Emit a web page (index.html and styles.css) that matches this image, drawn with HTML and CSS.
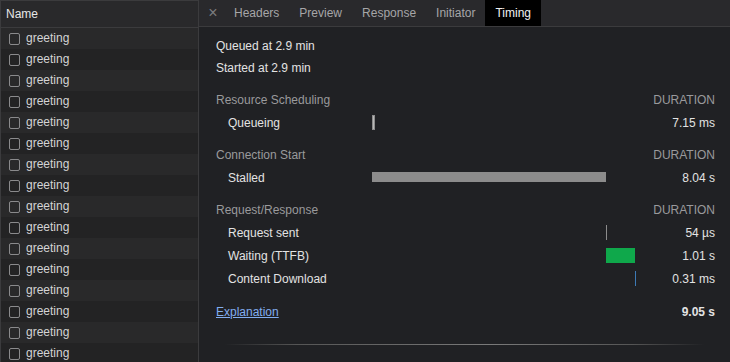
FILE: index.html
```html
<!DOCTYPE html>
<html lang="en">
<head>
    <meta charset="UTF-8">
    <title>Network - Timing</title>
    <link rel="stylesheet" href="styles.css">
</head>
<body>
    <div class="request-list">
        <div class="list-header">Name</div>
        <ul class="requests">
            <li><span class="check"></span>greeting</li>
            <li><span class="check"></span>greeting</li>
            <li><span class="check"></span>greeting</li>
            <li><span class="check"></span>greeting</li>
            <li><span class="check"></span>greeting</li>
            <li><span class="check"></span>greeting</li>
            <li><span class="check"></span>greeting</li>
            <li><span class="check"></span>greeting</li>
            <li><span class="check"></span>greeting</li>
            <li><span class="check"></span>greeting</li>
            <li><span class="check"></span>greeting</li>
            <li><span class="check"></span>greeting</li>
            <li><span class="check"></span>greeting</li>
            <li><span class="check"></span>greeting</li>
            <li><span class="check"></span>greeting</li>
            <li><span class="check"></span>greeting</li>
        </ul>
    </div>

    <div class="details">
        <div class="tabs">
            <span class="tab-close">&times;</span>
            <span class="tab">Headers</span>
            <span class="tab">Preview</span>
            <span class="tab">Response</span>
            <span class="tab">Initiator</span>
            <span class="tab active">Timing</span>
        </div>

        <div class="timing">
            <div class="stamp">Queued at 2.9 min</div>
            <div class="stamp">Started at 2.9 min</div>

            <div class="row section">
                <span class="label">Resource Scheduling</span>
                <span class="track"></span>
                <span class="value">DURATION</span>
            </div>
            <div class="row">
                <span class="label">Queueing</span>
                <span class="track"><i class="bar queueing" style="left: 0; width: 3px"></i></span>
                <span class="value">7.15 ms</span>
            </div>

            <div class="row section">
                <span class="label">Connection Start</span>
                <span class="track"></span>
                <span class="value">DURATION</span>
            </div>
            <div class="row">
                <span class="label">Stalled</span>
                <span class="track"><i class="bar stalled" style="left: 0; width: 234px"></i></span>
                <span class="value">8.04 s</span>
            </div>

            <div class="row section">
                <span class="label">Request/Response</span>
                <span class="track"></span>
                <span class="value">DURATION</span>
            </div>
            <div class="row">
                <span class="label">Request sent</span>
                <span class="track"><i class="bar sending" style="left: 234px; width: 1px"></i></span>
                <span class="value">54 µs</span>
            </div>
            <div class="row">
                <span class="label">Waiting (TTFB)</span>
                <span class="track"><i class="bar waiting" style="left: 234px; width: 29px"></i></span>
                <span class="value">1.01 s</span>
            </div>
            <div class="row">
                <span class="label">Content Download</span>
                <span class="track"><i class="bar download" style="left: 263px; width: 1px"></i></span>
                <span class="value">0.31 ms</span>
            </div>

            <div class="row total">
                <a class="label" href="#">Explanation</a>
                <span class="track"></span>
                <span class="value">9.05 s</span>
            </div>

            <div class="divider"></div>
        </div>
    </div>
</body>
</html>
```

FILE: styles.css
```css
:root {
    --bg-panel: #202124;
    --bg-header: #29292b;
    --row-odd: #29292a;
    --row-even: #232324;
    --border-color: #3b3b3d;
    --text-primary: #e3e3e3;
    --text-secondary: #9a9a9c;
    --link: #82aef0;
}

* {
    margin: 0;
    padding: 0;
    box-sizing: border-box;
    font-family: 'Liberation Sans', Arial, sans-serif;
}

body {
    display: flex;
    height: 362px;
    overflow: hidden;
    background: var(--bg-panel);
    color: var(--text-primary);
    font-size: 12px;
}

.request-list {
    width: 199px;
    flex-shrink: 0;
    border-left: 1px solid var(--border-color);
    border-right: 1px solid var(--border-color);
    background: var(--row-even);
}

.list-header {
    height: 28px;
    line-height: 26px;
    padding-left: 5px;
    background: var(--bg-header);
    border-top: 1px solid var(--border-color);
    border-bottom: 1px solid var(--border-color);
    color: #e6e6e6;
}

.requests {
    list-style: none;
}

.requests li {
    height: 21px;
    display: flex;
    align-items: center;
    gap: 6px;
    padding: 0 0 2px 8px;
    color: #d4d4d4;
}

.requests li:nth-child(odd) {
    background: var(--row-odd);
}

.check {
    width: 11px;
    height: 12px;
    margin-top: 2px;
    border: 1px solid #8a8a8c;
    border-radius: 2px;
}

.details {
    flex: 1;
    display: flex;
    flex-direction: column;
}

.tabs {
    height: 27px;
    display: flex;
    background: #29292c;
    border-bottom: 1px solid var(--border-color);
}

.tab-close {
    width: 25px;
    padding-left: 3px;
    text-align: center;
    line-height: 25px;
    color: #7b7b7e;
    font-size: 16px;
}

.tab {
    padding: 0 10px;
    line-height: 26px;
    color: #a6a6a8;
}

.tab.active {
    background: #000000;
    color: #f2f2f2;
}

.timing {
    padding: 8px 15px 0 17px;
}

.stamp {
    line-height: 22px;
}

.row {
    display: grid;
    grid-template-columns: 156px 264px 1fr;
    height: 23px;
    align-items: center;
}

.row .label {
    padding-left: 12px;
}

.row .value {
    text-align: right;
}

.row.section {
    margin-top: 9px;
    color: var(--text-secondary);
}

.row.section .label {
    padding-left: 0;
}

.track {
    position: relative;
    height: 100%;
}

.bar {
    position: absolute;
    top: 4px;
    height: 15px;
}

.bar.queueing {
    background: #b8b8b8;
    border: 1px solid #8c8c8c;
}

.bar.stalled {
    top: 6px;
    height: 10px;
    background: #8c8c8c;
}

.bar.sending {
    background: #8c8c8c;
}

.bar.waiting {
    background: #0fa84b;
}

.bar.download {
    background: #3d7ab5;
}

.row.total {
    margin-top: 10px;
}

.row.total .label {
    padding-left: 0;
    color: var(--link);
    text-decoration: underline;
}

.row.total .value {
    font-weight: 700;
}

.divider {
    height: 1px;
    margin: 21px 10px 0 8px;
    background: linear-gradient(to right, rgba(120, 120, 120, 0), #555555 15%, #7a7a7a 55%, #555555 85%, rgba(120, 120, 120, 0));
}
```
